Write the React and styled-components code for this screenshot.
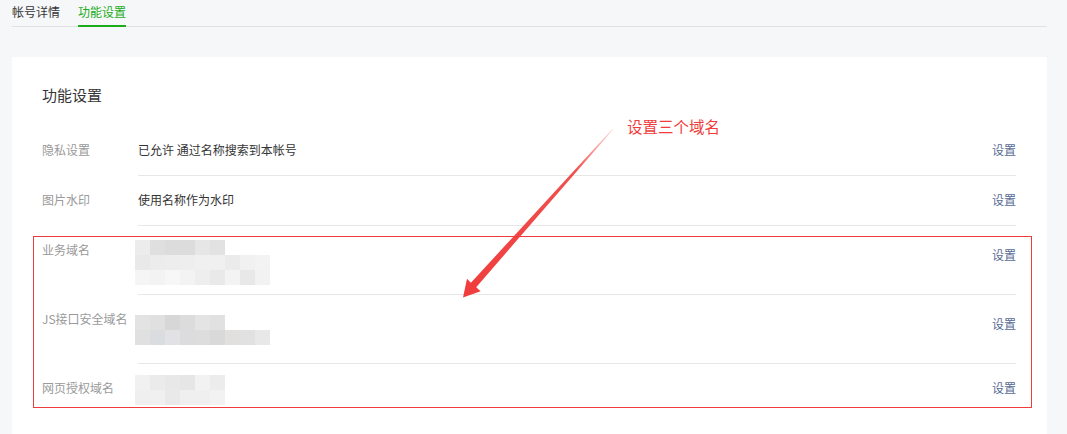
import React from "react";
import styled, { createGlobalStyle } from "styled-components";

const GlobalStyle = createGlobalStyle`
  html, body { margin: 0; padding: 0; background: #f6f7f9; }
  body {
    font-family: "Noto Sans CJK SC", "Noto Sans", "Liberation Sans", sans-serif;
    font-size: 12px;
    color: #353535;
  }
`;

const Page = styled.div`
  position: relative;
  min-height: 434px;
  overflow: hidden;
`;

const Nav = styled.div`
  display: flex;
  height: 26px;
  margin: 0 20px 0 12px;
  border-bottom: 1px solid #e2e2e2;
`;

const Tab = styled.div`
  box-sizing: border-box;
  height: 27px;
  line-height: 24px;
  font-size: 12px;
  margin-right: 18px;
  color: ${(p) => (p.$active ? "#1aad19" : "#353535")};
  border-bottom: 2px solid ${(p) => (p.$active ? "#1aad19" : "transparent")};
`;

const Card = styled.div`
  margin: 30px 20px 0 12px;
  background: #fff;
  border-radius: 2px;
  padding: 28px 31px 40px 30px;
`;

const Title = styled.div`
  font-size: 15px;
  line-height: 20px;
  color: #353535;
  margin-bottom: 21px;
`;

const Row = styled.div`
  display: flex;
  align-items: flex-start;
`;

const Label = styled.div`
  width: 96px;
  flex-shrink: 0;
  white-space: nowrap;
  color: #9a9a9a;
  line-height: 20px;
  padding-top: 14px;
`;

const Body = styled.div`
  flex: 1;
  display: flex;
  align-items: flex-start;
  padding: 14px 0 ${(p) => (p.$multi ? 14 : 15)}px;
  border-bottom: 1px solid ${(p) => (p.$last ? "transparent" : "#e7e7e7")};
`;

const Value = styled.div`
  flex: 1;
  height: ${(p) => p.$lines * 20}px;
  line-height: 20px;
  color: #353535;
`;

const Action = styled.div`
  line-height: ${(p) => (p.$multi ? 30 : 20)}px;
  color: #576b95;
  white-space: nowrap;
`;

const Mosaic = styled.div`
  display: grid;
  grid-template-columns: repeat(9, 15px);
  grid-auto-rows: 15px;
  margin-left: -3px;
  margin-top: ${(p) => p.$dy}px;
  width: max-content;
`;

const Cell = styled.div`
  width: 15px;
  height: 15px;
  background: ${(p) => p.$c || "transparent"};
`;

const Highlight = styled.div`
  position: absolute;
  left: 33px;
  top: 236px;
  width: 999px;
  height: 172px;
  box-sizing: border-box;
  border: 1px solid #ee3b3b;
  pointer-events: none;
`;

const Note = styled.div`
  position: absolute;
  left: 627px;
  top: 116px;
  font-size: 15.5px;
  line-height: 20px;
  color: #f03c3c;
  white-space: nowrap;
`;

const ArrowSvg = styled.svg`
  position: absolute;
  left: 455px;
  top: 120px;
  pointer-events: none;
`;

const m1 = [
  ["#ececec", "#dfdfdf", "#dcdcdc", "#dcdcdc", "#e6e6e6", "#e2e2e2", null, null, null],
  ["#e9e9e9", "#ececec", "#ededed", "#eeeeee", "#f0f0f0", "#f0f0f0", "#ebebeb", "#f1f1f1", "#f3f3f3"],
  ["#f5f5f5", "#f3f3f3", "#f7f7f7", "#f3f3f3", "#eeeeee", "#e9e9e9", "#f3f3f3", "#e8e8e8", "#f2f2f2"],
];
const m2 = [
  ["#e3e3e3", "#e0e0e0", "#d7d7d7", "#dcdcdc", "#e4e4e4", "#e1e1e1", null, null, null],
  ["#e0e0e0", "#dbdcdf", "#e2e1e3", "#dcdbdd", "#dddddd", "#d9d9d9", "#e1e0df", "#e1e1e1", "#e8e8e8"],
];
const m3 = [
  ["#f1f1f1", "#ebebeb", "#e8e8e8", "#e6e6e6", "#f2f2f2", "#ececec", null, null, null],
  ["#efefef", "#f0f0f0", "#e9e9e9", "#efefef", "#efefef", "#f2f2f3", null, null, null],
];

function Blur({ data, dy }) {
  return (
    <Mosaic $dy={dy}>
      {data.flat().map((c, i) => (
        <Cell key={i} $c={c} />
      ))}
    </Mosaic>
  );
}

function SettingRow({ label, lines = 1, multi, last, children }) {
  return (
    <Row>
      <Label>{label}</Label>
      <Body $multi={multi} $last={last}>
        <Value $lines={lines}>{children}</Value>
        <Action $multi={multi}>设置</Action>
      </Body>
    </Row>
  );
}

export default function App() {
  return (
    <Page>
      <GlobalStyle />
      <Nav>
        <Tab>帐号详情</Tab>
        <Tab $active>功能设置</Tab>
      </Nav>
      <Card>
        <Title>功能设置</Title>
        <SettingRow label="隐私设置">已允许 通过名称搜索到本帐号</SettingRow>
        <SettingRow label="图片水印">使用名称作为水印</SettingRow>
        <SettingRow label="业务域名" lines={2} multi>
          <Blur data={m1} dy={0} />
        </SettingRow>
        <SettingRow label="JS接口安全域名" lines={2} multi>
          <Blur data={m2} dy={6} />
        </SettingRow>
        <SettingRow label="网页授权域名" last>
          <Blur data={m3} dy={-3} />
        </SettingRow>
      </Card>

      <Highlight />
      <Note>设置三个域名</Note>
      <ArrowSvg width="165" height="185" viewBox="455 120 165 185">
        <defs>
          <linearGradient id="shaft" x1="613" y1="129" x2="463" y2="297" gradientUnits="userSpaceOnUse">
            <stop offset="0" stopColor="#f03c3c" stopOpacity="0.15" />
            <stop offset="0.25" stopColor="#f03c3c" stopOpacity="0.9" />
            <stop offset="1" stopColor="#f03c3c" stopOpacity="1" />
          </linearGradient>
        </defs>
        <polygon
          fill="url(#shaft)"
          points="613.4,129.3 476.2,287.2 480.6,291.2 463,297.5 467,278.8 470.9,282.8 612.6,128.7"
        />
      </ArrowSvg>
    </Page>
  );
}
